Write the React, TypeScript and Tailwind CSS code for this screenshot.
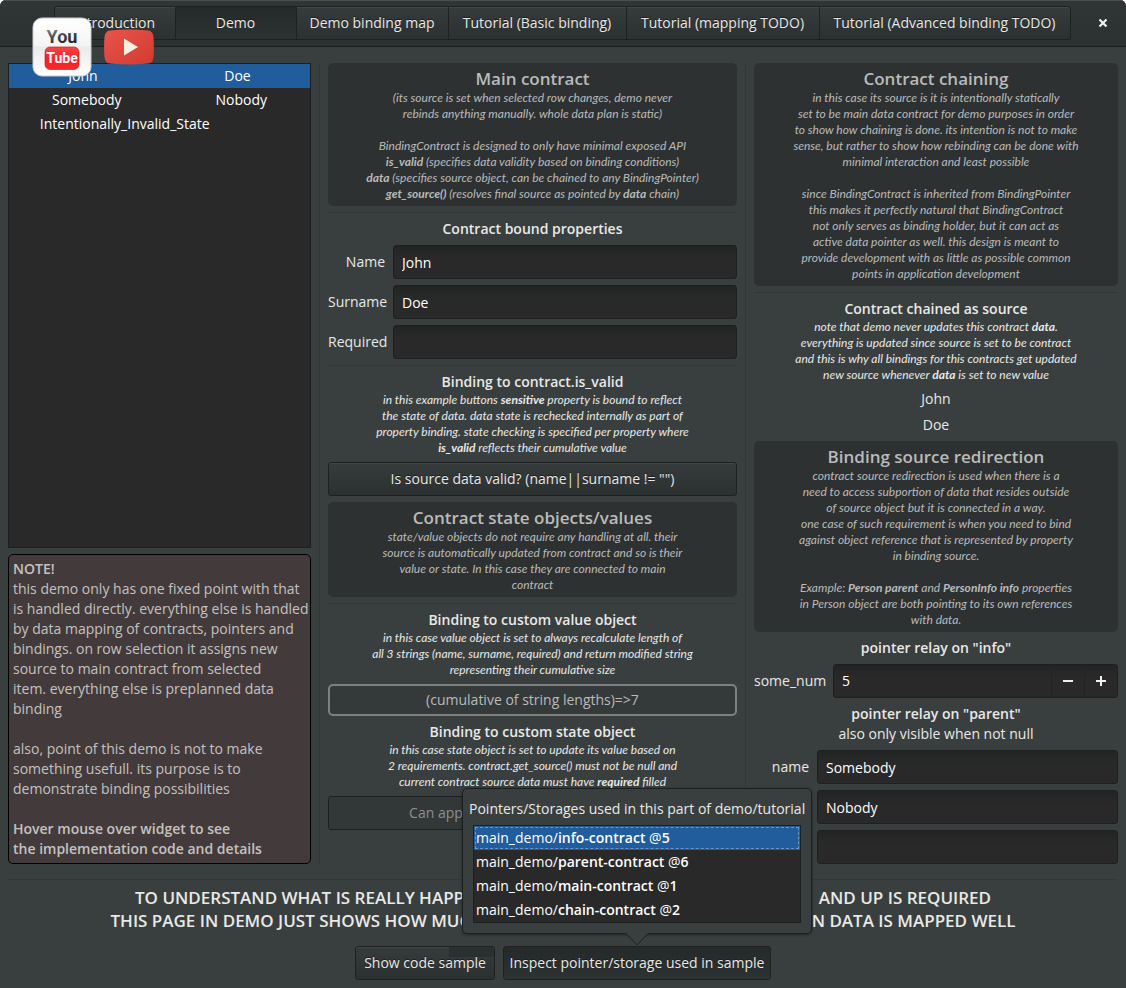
import { Fragment, useState, type ReactNode } from "react";

const tabs = [
  { label: "Introduction", width: "basis-[122px]" },
  { label: "Demo", width: "basis-[121px]" },
  { label: "Demo binding map", width: "basis-[152px]" },
  { label: "Tutorial (Basic binding)", width: "basis-[178px]" },
  { label: "Tutorial (mapping TODO)", width: "basis-[193px]" },
  { label: "Tutorial (Advanced binding TODO)", width: "basis-[251px]" },
];

const people = [["John", "Doe"], ["Somebody", "Nobody"], ["Intentionally_Invalid_State", ""]];

const storages = [
  ["info-contract", "5"],
  ["parent-contract", "6"],
  ["main-contract", "1"],
  ["chain-contract", "2"],
];

const raised =
  "border border-[#1d2122] bg-linear-to-b from-[#363b3b] to-[#2b3030] shadow-[inset_0_1px_0_#414747] [text-shadow:0_-1px_0_#1a1d1d]";
const pressed =
  "border border-[#1d2122] bg-linear-to-b from-[#242929] to-[#2d3232] [text-shadow:0_-1px_0_#1a1d1d]";
const entry =
  "h-[34px] w-full min-w-0 rounded-[3px] border border-[#1d2020] bg-linear-to-b from-[#222424] to-[#292929] to-40% px-2 text-white outline-none";

function Lines({ rows }: { rows: ReactNode[] }) {
  return (
    <>
      {rows.map((row, i) => (
        <Fragment key={i}>
          {i > 0 && <br />}
          {row}
        </Fragment>
      ))}
    </>
  );
}

function Small({ rows }: { rows: ReactNode[] }) {
  return (
    <p className="text-center font-['Lato',sans-serif] text-[12px] leading-4 italic">
      <Lines rows={rows} />
    </p>
  );
}

function Panel({ title, rows }: { title: string; rows: ReactNode[] }) {
  return (
    <section className="rounded-[5px] bg-[#2e3132] p-1 text-[#b9bbba]">
      <h2 className="text-center text-[17px] leading-[23px] font-semibold">{title}</h2>
      <Small rows={rows} />
    </section>
  );
}

function Topic({ title, rows }: { title: string; rows: ReactNode[] }) {
  return (
    <section>
      <h3 className="text-center font-semibold">{title}</h3>
      <Small rows={rows} />
    </section>
  );
}

function Rule() {
  return <hr className="border-0 border-t border-[#313636]" />;
}

function Field({ label, value, labelWidth }: { label: string; value: string; labelWidth: string }) {
  return (
    <label className="flex items-center gap-2">
      <span className={"shrink-0 text-right whitespace-nowrap " + labelWidth}>{label}</span>
      <input className={entry} defaultValue={value} />
    </label>
  );
}

function PeopleList() {
  const [selected, setSelected] = useState(0);
  return (
    <ul className="flex-1 border border-[#1d2020] bg-[#292929] text-white">
      {people.map(([name, surname], i) => (
        <li key={name}>
          <button
            type="button"
            onClick={() => setSelected(i)}
            className={"flex h-6 w-full items-center gap-2 " + (selected === i ? "bg-[#215d9c]" : "")}
          >
            <span className="flex-auto">{name}</span>
            <span className="flex-auto">{surname}</span>
          </button>
        </li>
      ))}
    </ul>
  );
}

function Note() {
  return (
    <section className="rounded-[5px] border border-black bg-[#433b3b] p-1 whitespace-nowrap text-[#c4c2c0]">
      <h3 className="font-semibold">NOTE!</h3>
      <p>
        <Lines
          rows={[
            "this demo only has one fixed point with that",
            "is handled directly. everything else is handled",
            "by data mapping of contracts, pointers and",
            "bindings. on row selection it assigns new",
            "source to main contract from selected",
            "item. everything else is preplanned data",
            "binding",
            "",
            "also, point of this demo is not to make",
            "something usefull. its purpose is to",
            "demonstrate binding possibilities",
          ]}
        />
      </p>
      <p className="mt-5 font-semibold">
        <Lines rows={["Hover mouse over widget to see", "the implementation code and details"]} />
      </p>
    </section>
  );
}

function StoragePopover() {
  return (
    <div className="absolute bottom-full left-1/2 z-10 mb-3 w-[350px] -translate-x-1/2 rounded-[5px] border border-[#1b1f1f] bg-[#393f3f] px-[6px] py-[10px] shadow-[0_1px_3px_rgba(0,0,0,0.4)]">
      <p className="text-center whitespace-nowrap">Pointers/Storages used in this part of demo/tutorial</p>
      <ul className="mx-1 mt-[6px] border border-[#1d2020] bg-[#292929] text-white">
        {storages.map(([name, id], i) => (
          <li key={name} className={"h-6 p-px " + (i === 0 ? "bg-[#215d9c]" : "")}>
            <div
              className={
                "flex h-full items-center border border-dashed whitespace-pre " +
                (i === 0 ? "border-[#6d95c0]" : "border-transparent")
              }
            >
              main_demo/<b className="font-semibold">{name}</b> @<b className="font-semibold">{id}</b>
            </div>
          </li>
        ))}
      </ul>
      <svg className="absolute top-full left-1/2 -ml-[11px]" width="22" height="13" viewBox="0 0 22 13" aria-hidden="true">
        <path d="M0 -1 L0 0.5 L11 12 L22 0.5 L22 -1 Z" fill="#393f3f" />
        <path d="M0 0.5 L11 12 L22 0.5" fill="none" stroke="#1b1f1f" />
      </svg>
    </div>
  );
}

function ShortcutIcons() {
  return (
    <div className="absolute top-[17px] left-8 z-20 flex items-center">
      <svg width="60" height="60" viewBox="0 0 60 60" aria-hidden="true">
        <defs>
          <linearGradient id="tile" x1="0" y1="0" x2="0" y2="1">
            <stop offset="0" stopColor="#ffffff" />
            <stop offset="0.48" stopColor="#f4f4f4" />
            <stop offset="0.5" stopColor="#eaeaea" />
            <stop offset="1" stopColor="#ffffff" />
          </linearGradient>
          <linearGradient id="tube" x1="0" y1="0" x2="0" y2="1">
            <stop offset="0" stopColor="#f2484a" />
            <stop offset="0.5" stopColor="#fb1f22" />
            <stop offset="1" stopColor="#f5292c" />
          </linearGradient>
          <linearGradient id="ink" x1="0" y1="0" x2="0.4" y2="1">
            <stop offset="0" stopColor="#999999" />
            <stop offset="0.6" stopColor="#444444" />
            <stop offset="1" stopColor="#222222" />
          </linearGradient>
        </defs>
        <rect x="1" y="1" width="58" height="58" rx="9" fill="url(#tile)" stroke="#c9cccc" />
        <rect x="13" y="30" width="34" height="22.500" rx="5" fill="url(#tube)" stroke="#c81316" strokeWidth="0.600" />
        <text x="30" y="26" textAnchor="middle" fontFamily="Roboto, sans-serif" fontWeight="700" fontSize="18" fill="url(#ink)">
          You
        </text>
        <text x="30" y="46" textAnchor="middle" fontFamily="Roboto, sans-serif" fontWeight="700" fontSize="14" fill="#ffffff">
          Tube
        </text>
      </svg>
      <svg className="ml-3" width="50" height="36" viewBox="0 0 50 36" aria-hidden="true">
        <defs>
          <linearGradient id="play" x1="0" y1="0" x2="1" y2="1">
            <stop offset="0" stopColor="#e8554b" />
            <stop offset="1" stopColor="#d23a2f" />
          </linearGradient>
        </defs>
        <path d="M6 1.500 Q25 -0.500 44 1.500 Q49 2 49.500 8 Q50.300 18 49.500 28 Q49 34 44 34.500 Q25 36.500 6 34.500 Q1 34 0.500 28 Q-0.300 18 0.500 8 Q1 2 6 1.500 Z" fill="url(#play)" />
        <path d="M20 9.500 L34 18 L20 26.500 Z" fill="#f5efe0" />
      </svg>
    </div>
  );
}

export default function App() {
  const [tab, setTab] = useState(1);
  const [num, setNum] = useState(5);
  return (
    <div className="relative min-h-screen overflow-hidden rounded-t-[6px] bg-[#393f3f] font-['Open_Sans',sans-serif] text-[14px] leading-5 text-[#e9e9e7]">
      <ShortcutIcons />
      <header className="flex items-center border-b border-[#1c2020] bg-linear-to-b from-[#303636] to-[#2c3131] py-[6px] pr-3 pl-8 shadow-[inset_0_1px_0_#4a5050]">
        <nav className="flex min-w-0 flex-1 justify-center">
          {tabs.map((t, i) => (
            <button
              key={t.label}
              type="button"
              onClick={() => setTab(i)}
              className={
                "h-[34px] min-w-0 whitespace-nowrap first:rounded-l-[3px] last:rounded-r-[3px] not-first:border-l-0 " +
                t.width + " " + (tab === i ? pressed : raised)
              }
            >
              {t.label}
            </button>
          ))}
        </nav>
        <button type="button" aria-label="Close" className="flex size-[22px] shrink-0 items-center justify-center">
          <svg width="10" height="10" viewBox="0 0 10 10" aria-hidden="true">
            <path d="M1.500 1.500 L8.500 8.500 M8.500 1.500 L1.500 8.500" stroke="#f0f0ee" strokeWidth="2.200" />
          </svg>
        </button>
      </header>

      <main className="px-2 pt-4 pb-2">
        <div className="grid grid-cols-[minmax(0,303fr)_1px_minmax(0,409fr)_1px_minmax(0,364fr)] gap-x-2">
          <div className="flex flex-col gap-[6px]">
            <PeopleList />
            <Note />
          </div>

          <div className="bg-[#313636]" />

          <div className="flex flex-col gap-[6px]">
            <Panel
              title="Main contract"
              rows={[
                "(its source is set when selected row changes, demo never",
                "rebinds anything manually. whole data plan is static)",
                "",
                "BindingContract is designed to only have minimal exposed API",
                <><b>is_valid</b> (specifies data validity based on binding conditions)</>,
                <><b>data</b> (specifies source object, can be chained to any BindingPointer)</>,
                <><b>get_source()</b> (resolves final source as pointed by <b>data</b> chain)</>,
              ]}
            />
            <Rule />
            <h3 className="text-center font-semibold">Contract bound properties</h3>
            <Field label="Name" value="John" labelWidth="w-[57px]" />
            <Field label="Surname" value="Doe" labelWidth="w-[57px]" />
            <Field label="Required" value="" labelWidth="w-[57px]" />
            <Rule />
            <Topic
              title="Binding to contract.is_valid"
              rows={[
                <>in this example buttons <b>sensitive</b> property is bound to reflect</>,
                "the state of data. data state is rechecked internally as part of",
                "property binding. state checking is specified per property where",
                <><b>is_valid</b> reflects their cumulative value</>,
              ]}
            />
            <button type="button" className={"h-[34px] rounded-[3px] " + raised}>
              Is source data valid? (name||surname != "")
            </button>
            <Panel
              title="Contract state objects/values"
              rows={[
                "state/value objects do not require any handling at all. their",
                "source is automatically updated from contract and so is their",
                "value or state. In this case they are connected to main",
                "contract",
              ]}
            />
            <Rule />
            <Topic
              title="Binding to custom value object"
              rows={[
                "in this case value object is set to always recalculate length of",
                "all 3 strings (name, surname, required) and return modified string",
                "representing their cumulative size",
              ]}
            />
            <output className="block rounded-[5px] border-2 border-[#7f8080] bg-[#343939] py-1 text-center text-[#b9bbba]">
              (cumulative of string lengths)=&gt;7
            </output>
            <Topic
              title="Binding to custom state object"
              rows={[
                "in this case state object is set to update its value based on",
                "2 requirements. contract.get_source() must not be null and",
                <>current contract source data must have <b>required</b> filled</>,
              ]}
            />
            <button
              type="button"
              disabled
              className="h-[34px] rounded-[3px] border border-[#1d2122] bg-[#323738] text-[#8c8f8f]"
            >
              Can apply now? (requires "required" !)
            </button>
          </div>

          <div className="bg-[#313636]" />

          <div className="flex flex-col gap-[6px]">
            <Panel
              title="Contract chaining"
              rows={[
                "in this case its source is it is intentionally statically",
                "set to be main data contract for demo purposes in order",
                "to show how chaining is done. its intention is not to make",
                "sense, but rather to show how rebinding can be done with",
                "minimal interaction and least possible",
                "",
                "since BindingContract is inherited from BindingPointer",
                "this makes it perfectly natural that BindingContract",
                "not only serves as binding holder, but it can act as",
                "active data pointer as well. this design is meant to",
                "provide development with as little as possible common",
                "points in application development",
              ]}
            />
            <Rule />
            <Topic
              title="Contract chained as source"
              rows={[
                <>note that demo never updates this contract <b>data</b>.</>,
                "everything is updated since source is set to be contract",
                "and this is why all bindings for this contracts get updated",
                <>new source whenever <b>data</b> is set to new value</>,
              ]}
            />
            <p className="text-center">John</p>
            <p className="text-center">Doe</p>
            <Panel
              title="Binding source redirection"
              rows={[
                "contract source redirection is used when there is a",
                "need to access subportion of data that resides outside",
                "of source object but it is connected in a way.",
                "one case of such requirement is when you need to bind",
                "against object reference that is represented by property",
                "in binding source.",
                "",
                <>Example: <b>Person parent</b> and <b>PersonInfo info</b> properties</>,
                "in Person object are both pointing to its own references",
                "with data.",
              ]}
            />
            <h3 className="text-center font-semibold">pointer relay on "info"</h3>
            <div className="flex items-center gap-2">
              <label htmlFor="some-num" className="w-[71px] shrink-0 whitespace-nowrap">some_num</label>
              <div className="flex h-[34px] min-w-0 flex-1 rounded-[3px] border border-[#1d2020] bg-linear-to-b from-[#222424] to-[#292929] to-40% text-white">
                <input
                  id="some-num"
                  className="min-w-0 flex-1 bg-transparent px-2 outline-none"
                  value={num}
                  onChange={(e) => setNum(Number(e.target.value) || 0)}
                />
                <button type="button" aria-label="Decrease" onClick={() => setNum(num - 1)} className="flex w-[33px] items-center justify-center border-l border-[#222424]">
                  <svg width="10" height="10" viewBox="0 0 10 10" aria-hidden="true">
                    <path d="M0 5 H10" stroke="#f0f0ee" strokeWidth="2" />
                  </svg>
                </button>
                <button type="button" aria-label="Increase" onClick={() => setNum(num + 1)} className="flex w-[33px] items-center justify-center border-l border-[#222424]">
                  <svg width="10" height="10" viewBox="0 0 10 10" aria-hidden="true">
                    <path d="M0 5 H10 M5 0 V10" stroke="#f0f0ee" strokeWidth="2" />
                  </svg>
                </button>
              </div>
            </div>
            <div className="text-center">
              <h3 className="font-semibold">pointer relay on "parent"</h3>
              <p>also only visible when not null</p>
            </div>
            <Field label="name" value="Somebody" labelWidth="w-[55px]" />
            <div className="flex justify-end pl-[63px]">
              <input aria-label="surname" className={entry} defaultValue="Nobody" />
            </div>
            <div className="flex justify-end pl-[63px]">
              <input aria-label="required" className={entry} />
            </div>
          </div>
        </div>

        <div className="mt-[15px]">
          <Rule />
        </div>

        <div className="mt-[6px] flex flex-col items-center text-[17px] leading-[23px] font-semibold whitespace-nowrap">
          <p className="flex w-full max-w-[856px] justify-between">
            <span>TO UNDERSTAND WHAT IS REALLY HAPPENING, BASIC TUTORIAL</span>
            <span>AND UP IS REQUIRED</span>
          </p>
          <p className="flex w-full max-w-[905px] justify-between">
            <span>THIS PAGE IN DEMO JUST SHOWS HOW MUCH</span>
            <span>IS DONE WHEN DATA IS MAPPED WELL</span>
          </p>
        </div>

        <div className="mt-[14px] flex justify-center gap-2">
          <button type="button" className={"relative h-[34px] w-[140px] rounded-[3px] whitespace-nowrap " + raised}>
            <span className="absolute top-0 right-0 h-[10px] w-[45px] bg-[#2a2f2f]" />
            <span className="relative">Show code sample</span>
          </button>
          <div className="relative">
            <StoragePopover />
            <button type="button" className={"h-[34px] w-[268px] rounded-[3px] whitespace-nowrap " + pressed}>
              Inspect pointer/storage used in sample
            </button>
          </div>
        </div>
      </main>
    </div>
  );
}
